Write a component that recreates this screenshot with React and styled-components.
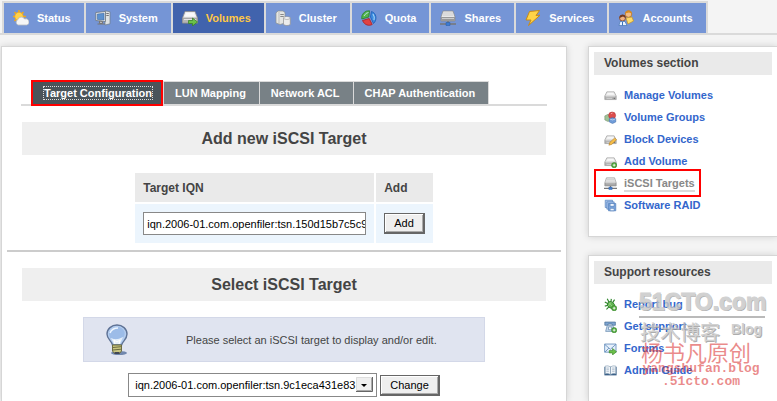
import React from 'react';
import styled, { createGlobalStyle, css } from 'styled-components';

const Global = createGlobalStyle`
  * { box-sizing: border-box; }
  body {
    margin: 0;
    background: #f4f4f4;
    color: #444;
    font: 11px/14px "Liberation Sans", Arial, sans-serif;
  }
  a { text-decoration: none; }
  ul { list-style: none; margin: 0; padding: 0; }
`;

const Page = styled.div`
  min-height: 100vh;
  display: flex;
  flex-direction: column;
  overflow: hidden;
`;

const Nav = styled.nav`
  display: flex;
  padding: 1px 0 0 2px;
  border-bottom: 2px solid #dadada;
`;

const NavList = styled.ul`
  display: flex;
  gap: 2px;
  padding: 2px 2px 0;
  background: #dadada;
`;

const NavLink = styled.a`
  display: flex;
  align-items: center;
  gap: 8px;
  height: 30px;
  padding: 0 13px 0 9px;
  font-weight: bold;
  color: ${(p) => (p.$active ? '#ffc745' : '#fff')};
  background: ${(p) => (p.$active ? '#4163ad' : '#7595d6')};
`;

const Body = styled.div`
  flex: 1;
  display: flex;
  gap: 21px;
  padding: 11px 0 0 1px;
`;

const panel = css`
  background: #fff;
  border: 1px solid #d6d6d6;
  box-shadow: 0 0 7px rgba(0, 0, 0, 0.14);
`;

const Main = styled.main`
  ${panel}
  flex: 1;
  min-width: 0;
  border-bottom: 0;
  padding: 34px 5px 0;
`;

const Section = styled.section`
  padding: 0 15px;
`;

const TabBar = styled.nav`
  display: flex;
  margin: 0 -1px;
  padding-left: 11px;
  border-bottom: 2px solid #dadada;
`;

const TabList = styled.ul`
  display: flex;
  gap: 1px;
  padding: 1px 1px 0;
  background: #dadada;
`;

const Tab = styled.a`
  display: block;
  height: 22px;
  padding: 4px 13px 0 11px;
  font-weight: bold;
  color: #fff;
  background: #788186;
  ${(p) =>
    p.$active &&
    css`
      background: #4a545a;
      outline: 2px solid #f00;
      outline-offset: 0;
      padding-right: 9px;
      margin-right: 2px;
      span { outline: 1px dotted #ddd; }
    `}
`;

const Title = styled.h2`
  margin: 16px 0 0;
  background: #efefef;
  color: #444;
  text-align: center;
  font-size: 16px;
  line-height: 33px;
`;

const Table = styled.table`
  margin: 16px auto 5px;
  border-spacing: 2px;
`;

const Th = styled.th`
  height: 29px;
  padding: 0 8px;
  text-align: left;
  font-size: 12px;
  background: #eaeaea;
`;

const Td = styled.td`
  height: 39px;
  padding: 0 8px;
  background: #ecf5fd;
`;

const TextInput = styled.input`
  display: block;
  width: 223px;
  height: 23px;
  padding: 2px 0 2px 3px;
  border: 1px solid #888;
  font: 11px "Liberation Sans", Arial, sans-serif;
  color: #000;
`;

const Button = styled.button`
  display: block;
  height: 21px;
  padding: 0 9px;
  color: #000;
  background: #efefef;
  border: 1px solid #666;
  border-right-width: 2px;
  border-bottom-width: 2px;
  box-shadow: inset 1px 1px #fff, inset -1px -1px #aaa;
  font: 11px "Liberation Sans", Arial, sans-serif;
`;

const Rule = styled.hr`
  margin: 0;
  border: 0;
  height: 2px;
  background: #ccc;
`;

const Notice = styled.div`
  display: flex;
  align-items: center;
  width: 402px;
  max-width: 100%;
  height: 45px;
  margin: 16px auto 11px;
  padding-left: 20px;
  gap: 56px;
  background: #e0e4f0;
  border: 1px solid #d3d8e8;
`;

const ChangeForm = styled.form`
  display: flex;
  justify-content: center;
  align-items: center;
  gap: 3px;
`;

const SelectBox = styled.div`
  position: relative;
  svg { position: absolute; top: 4px; right: 4px; pointer-events: none; }
`;

const Select = styled.select`
  appearance: none;
  display: block;
  width: 249px;
  height: 24px;
  padding: 0 20px 0 6px;
  border: 1px solid #888;
  border-radius: 0;
  background: #fff;
  color: #000;
  font: 11px "Liberation Sans", Arial, sans-serif;
`;

const Sidebar = styled.aside`
  position: relative;
  width: 189px;
  display: flex;
  flex-direction: column;
  gap: 18px;
`;

const Card = styled.section`
  ${panel}
  padding: 5px 5px 20px;
  border-right: 0;
  ${(p) => p.$fill && css`flex: 1; border-bottom: 0;`}
`;

const CardTitle = styled.h3`
  margin: 0 0 9px;
  padding-left: 10px;
  background: #eaeaea;
  font-size: 12px;
  line-height: 23px;
`;

const LinkRow = styled.li`
  display: flex;
  align-items: center;
  gap: 7px;
  height: 22px;
  padding-left: 10px;
`;

const SideLink = styled.a`
  font-weight: bold;
  color: ${(p) => (p.$active ? '#888' : '#36c')};
  box-shadow: ${(p) => (p.$active ? '0 2px #dadada' : 'none')};
`;

const Marked = styled.span`
  position: absolute;
  top: 123px;
  left: 6px;
  width: 107px;
  height: 28px;
  border: 2px solid #f00;
  pointer-events: none;
`;

const Stamp = styled.div`
  position: absolute;
  top: 243px;
  left: 51px;
  width: 126px;
  pointer-events: none;
  color: #c6c6c6;
  opacity: 0.8;
  text-shadow: 1px 1px #999;
`;

const StampLogo = styled.div`
  font: bold 23px/27px "Liberation Sans", sans-serif;
  -webkit-text-stroke: 1px #c6c6c6;
  border-bottom: 2px solid #aaa;
`;

const StampSub = styled.div`
  display: flex;
  justify-content: space-between;
  padding: 0 3px 0 1px;
  font: bold 14px/22px "Liberation Sans", sans-serif;
  span { font: 20px/28px "Noto Sans CJK SC", sans-serif; }
`;

const Signature = styled.div`
  position: absolute;
  top: 294px;
  left: 53px;
  width: 120px;
  pointer-events: none;
  color: rgba(220, 60, 60, 0.6);
  font: bold 13px/13px "Liberation Mono", monospace;
  text-align: center;
  strong { display: block; font: 22px/22px "Noto Sans CJK SC", sans-serif; text-align: left; }
`;

const Svg = ({ size = 16, children }) => (
  <svg width={size} height={size} viewBox="0 0 16 16" aria-hidden="true">{children}</svg>
);

const Disk = () => (
  <g>
    <path d="M3.5 3.5h9l2.5 5v4.5H1V8.500z" fill="#e6e6e6" stroke="#8c8c8c" strokeWidth=".7" />
    <path d="M1 8.500h14V13H1z" fill="#aaa" />
    <path d="M2 9.500h12M3 11.500h7" stroke="#ddd" />
    <path d="M4.500 4.500h7l1 2.500H3.500z" fill="#f7f7f7" />
    <path d="M12 11.500h1.500" stroke="#555" />
  </g>
);

const BigDisk = () => (
  <g>
    <path d="M3 1.500h10l2.500 6.500v5H.5V8z" fill="#ededed" stroke="#8c8c8c" strokeWidth=".8" />
    <path d="M.5 8h15v5H.5z" fill="#b5b5b5" stroke="#8c8c8c" strokeWidth=".6" />
    <path d="M2 9.500h12" stroke="#e4e4e4" />
    <path d="M4 3h8l1.200 3.500H2.800z" fill="#fafafa" />
  </g>
);

const NetDisk = () => (
  <g>
    <path d="M3 1h10l2 6v4H1V7z" fill="#e9e9e9" stroke="#888" strokeWidth=".7" />
    <path d="M1 7h14v4H1z" fill="#999" />
    <path d="M3 3h10M2.500 5h11M2 8.500h12" stroke="#ccc" />
    <path d="M0 14h16M8 11v3" stroke="#777" strokeWidth="1.500" />
    <path d="M6 12.500h4v3H6z" fill="#3d7bd0" stroke="#245ba5" strokeWidth=".5" />
  </g>
);

const PlusDot = () => (
  <g>
    <circle cx="12.500" cy="12.500" r="3.200" fill="#4fa83d" stroke="#2d7c22" strokeWidth=".6" />
    <path d="M12.500 10.800v3.400M10.800 12.500h3.400" stroke="#fff" />
  </g>
);

const Arrow = () => (
  <path d="M6.500 10.500h4V8l5 4-5 4v-2.500h-4z" fill="#6cc04a" stroke="#2f7d20" strokeWidth=".7" />
);

const ICONS = {
  status: (
    <g>
      <path d="M6 0v13M0 6.500h13M1.500 2l9 9M10.500 2l-9 9" stroke="#f0a81c" strokeWidth="1.600" />
      <circle cx="6" cy="6.500" r="4.200" fill="#ffd24a" stroke="#f2a51d" strokeWidth=".7" />
      <path d="M5 15a3 3 0 0 1 0-5.500 3.500 3.500 0 0 1 6.500-.5 3 3 0 0 1 2.500 6z" fill="#f6f6f6" stroke="#b9bcc2" strokeWidth=".8" />
    </g>
  ),
  system: (
    <g>
      <path d="M10 .8l5 1v12l-5 1.200z" fill="#dfe3e4" stroke="#6f7d86" strokeWidth=".7" />
      <path d="M11.300 3.500h2.500M11.300 5.500h2.500" stroke="#777" />
      <path d="M.8 2.500l9.700-1v10l-9.700-1z" fill="#eee" stroke="#67747d" strokeWidth=".8" />
      <path d="M2.300 4l6.800-.7v6.700l-6.800-.6z" fill="#5c91cf" stroke="#315d99" strokeWidth=".5" />
      <path d="M4.500 11l3 .5v2H4.500zM2.500 14h7.500" fill="#bbb" stroke="#777" />
    </g>
  ),
  volumes: <g><BigDisk /><Arrow /></g>,
  cluster: (
    <g>
      <path d="M1 3l2-2h5l2 1.500V13l-5 1.500L1 13z" fill="#e4e5e3" stroke="#8d918e" strokeWidth=".7" />
      <path d="M4 2v12" stroke="#aaa" strokeWidth=".7" />
      <path d="M5.300 4.500h3.500M5.300 6.500h3.500" stroke="#888" />
      <path d="M8.500 8v6.500c2 1.400 4.800 1.400 6.800 0V8z" fill="#ececec" stroke="#929292" strokeWidth=".7" />
      <ellipse cx="11.900" cy="8" rx="3.400" ry="1.300" fill="#fff" stroke="#929292" strokeWidth=".7" />
    </g>
  ),
  quota: (
    <g strokeWidth=".8">
      <path d="M8.500.8A7 7 0 0 0 .8 9l7-2z" fill="#55b54b" stroke="#257f2b" />
      <path d="M10.500 1.500c5 1.500 6 8.500 2 12L9.500 7z" fill="#3d8de0" stroke="#1c5bb5" />
      <path d="M1.500 10.500L8.200 8.500l3 6c-3 1.600-7.500 1-9.700-4z" fill="#e14242" stroke="#a91d20" />
      <path d="M3 6q2-3.500 4.500-3.500M12 4q2 3 1 6" fill="none" stroke="#c9ecff" />
    </g>
  ),
  net: <NetDisk />,
  services: <path d="M4.500 1.500L14.500.5 11 5.500l4-.3L3.500 15.500 6 10H1z" fill="#ffd447" stroke="#c98a15" />,
  accounts: (
    <g>
      <circle cx="10.500" cy="4" r="3.300" fill="#f1bd87" stroke="#b97323" strokeWidth=".8" />
      <path d="M7 3.500q1-3.300 3.700-3.100T14 3.500l-3-1z" fill="#d88c21" />
      <path d="M8 8l6-1 1.500 4-5.500 3z" fill="#fbdc6b" stroke="#c89324" strokeWidth=".7" />
      <circle cx="4.500" cy="8" r="3" fill="#efb181" stroke="#804223" strokeWidth=".8" />
      <path d="M1.500 8q0-3.700 3.500-3.200Q8 5 7.500 8L5 6.500z" fill="#713a20" />
      <path d="M1 15.500l1-4h5l2 4z" fill="#e9f3ff" stroke="#4877b5" strokeWidth=".7" />
      <path d="M4.500 12v3.500" stroke="#3b73bd" />
    </g>
  ),
  disk: <Disk />,
  groups: (
    <g strokeWidth=".6">
      <path d="M1 6l4-2 3 2v5l-3 2-4-2z" fill="#9fc397" stroke="#66835f" />
      <circle cx="10" cy="5.500" r="4.300" fill="#dc4d4d" stroke="#a92b2e" />
      <path d="M6.500 9.500l4-1.500 4 1.500v4l-4 2-4-2z" fill="#6f9bd8" stroke="#3b65a4" />
      <path d="M8.500 3.500l2-1M7.500 10l3 1 3-1" fill="none" stroke="#fff" />
    </g>
  ),
  block: <g><Disk /><path d="M6 15l1.200-3.500 6-5.500 2.300 2.300-6 5.700z" fill="#f5bd48" stroke="#a8701a" strokeWidth=".6" /></g>,
  add: <g><Disk /><PlusDot /></g>,
  raid: (
    <g fill="#a9c6ee" stroke="#4d7bb9" strokeWidth=".8">
      <path d="M1.500 1.500h9v9h-9z" /><path d="M3.500 3.500h9v9h-9z" /><path d="M5.500 5.500h9v9h-9z" fill="#7ba4dc" />
      <path d="M7.500 5.500h5V9h-5zM7.500 11.500h5v3h-5z" fill="#f3f7fd" />
    </g>
  ),
  bug: (
    <g>
      <path d="M1 5l4 2M1 10l4-1M4 1l2 4M9 1L8.500 5M13 2l-2.500 4M3 14l3-3" stroke="#2e852b" strokeWidth="1.400" />
      <ellipse cx="8.500" cy="8.500" rx="4.600" ry="3.800" transform="rotate(35 8.500 8.500)" fill="#62b552" stroke="#2c7c29" />
      <path d="M6 6l5 5M9 5l-4 5" stroke="#a4dc90" strokeWidth=".8" /><PlusDot />
    </g>
  ),
  phone: (
    <g>
      <path d="M1 2.500h13v4H10V5H5v1.500H1z" fill="#7ea4d0" stroke="#42698f" strokeWidth=".8" />
      <path d="M4 6.500h7l2 7.500H2z" fill="#c6d9ee" stroke="#5b7fa5" strokeWidth=".8" />
      <path d="M5.500 8.500h4v3.500h-4z" fill="#fff" stroke="#7292b3" /><PlusDot />
    </g>
  ),
  mail: <g><path d="M.8 2.500h14v10H.8z" fill="#e6f0fb" stroke="#5d88b8" /><path d="M1 3l6.800 6L14.500 3M1 12.500l5-5" fill="none" stroke="#5d88b8" /><Arrow /></g>,
  book: (
    <g>
      <path d="M.5 3.500h15V14H.5z" fill="#365d86" />
      <path d="M1.500 2.500q3.500-1 6.500 1v9.500q-3-2-6.500-1zM14.500 2.500q-3.500-1-6.500 1v9.500q3-2 6.500-1z" fill="#f0f4f8" stroke="#7f98b0" strokeWidth=".7" />
      <path d="M3 5h3M3 7h3M3 9h3M10 5h3M10 7h3M10 9h3" stroke="#a7b7c7" />
    </g>
  ),
};

const Icon = ({ name, size }) => <Svg size={size}>{ICONS[name]}</Svg>;

const Bulb = () => (
  <svg width="26" height="32" viewBox="0 0 26 32" aria-hidden="true">
    <ellipse cx="15" cy="29" rx="8" ry="2" fill="#7187ad" />
    <path d="M8.500 21C8 17 3 15.500 3 10a10 9 0 0 1 20 0c0 5.500-4.500 7-5.500 11z" fill="#b4cdef" stroke="#5f7396" strokeWidth="1.400" />
    <path d="M5 10a8 7.500 0 0 1 15.500-2q1 5-4 6.500T6 14z" fill="#9cbce8" />
    <path d="M6 9q2-5 8-5" fill="none" stroke="#eef6ff" strokeWidth="1.500" />
    <path d="M7 14q5 3 12-1l-3 7h-6z" fill="#e4effb" />
    <path d="M11 20l-1-4 3 2 3-2-1 4" fill="none" stroke="#fff" />
    <path d="M8.500 21h9v6l-2 2.500h-5l-2-2.500z" fill="#c9c681" stroke="#6d6c40" />
    <path d="M9 23.500l8-.8M9 26l8-.8" stroke="#6d6c40" />
    <path d="M10.500 28h5v2h-5z" fill="#424754" />
  </svg>
);

const SelectArrow = () => (
  <svg width="17" height="15" viewBox="0 0 17 15" aria-hidden="true">
    <path d="M0 0h17v15H0z" fill="#efefef" />
    <path d="M.5 14V.5H16" fill="none" stroke="#ddd" />
    <path d="M15.500 1v12.500H1" fill="none" stroke="#aaa" />
    <path d="M16.500 0v14.500H0" fill="none" stroke="#666" />
    <path d="M5 7h6l-3 3z" fill="#000" />
  </svg>
);

const NAV = [
  ['Status', 'status'], ['System', 'system'], ['Volumes', 'volumes'], ['Cluster', 'cluster'],
  ['Quota', 'quota'], ['Shares', 'net'], ['Services', 'services'], ['Accounts', 'accounts'],
];
const TABS = ['Target Configuration', 'LUN Mapping', 'Network ACL', 'CHAP Authentication'];
const VOLUME_LINKS = [
  ['Manage Volumes', 'disk'], ['Volume Groups', 'groups'], ['Block Devices', 'block'],
  ['Add Volume', 'add'], ['iSCSI Targets', 'net'], ['Software RAID', 'raid'],
];
const SUPPORT_LINKS = [
  ['Report bug', 'bug'], ['Get support', 'phone'], ['Forums', 'mail'], ['Admin Guide', 'book'],
];

const LinkCard = ({ title, links, active, fill }) => (
  <Card $fill={fill}>
    <CardTitle>{title}</CardTitle>
    <ul>
      {links.map(([label, icon]) => (
        <LinkRow key={label}>
          <Icon name={icon} size={13} />
          <SideLink href="#" $active={label === active}>{label}</SideLink>
        </LinkRow>
      ))}
    </ul>
  </Card>
);

export default function App() {
  return (
    <Page>
      <Global />
      <Nav>
        <NavList>
          {NAV.map(([label, icon]) => (
            <li key={label}>
              <NavLink href="#" $active={label === 'Volumes'}><Icon name={icon} />{label}</NavLink>
            </li>
          ))}
        </NavList>
      </Nav>
      <Body>
        <Main>
          <Section>
            <TabBar>
              <TabList>
                {TABS.map((label, i) => (
                  <li key={label}><Tab href="#" $active={i === 0}><span>{label}</span></Tab></li>
                ))}
              </TabList>
            </TabBar>
            <Title>Add new iSCSI Target</Title>
            <Table>
              <thead><tr><Th scope="col">Target IQN</Th><Th scope="col">Add</Th></tr></thead>
              <tbody>
                <tr>
                  <Td><TextInput aria-label="Target IQN" defaultValue="iqn.2006-01.com.openfiler:tsn.150d15b7c5c9" /></Td>
                  <Td><Button type="button">Add</Button></Td>
                </tr>
              </tbody>
            </Table>
          </Section>
          <Rule />
          <Section>
            <Title>Select iSCSI Target</Title>
            <Notice><Bulb />Please select an iSCSI target to display and/or edit.</Notice>
            <ChangeForm>
              <SelectBox>
                <Select aria-label="iSCSI target"><option>iqn.2006-01.com.openfiler:tsn.9c1eca431e83</option></Select>
                <SelectArrow />
              </SelectBox>
              <Button type="button">Change</Button>
            </ChangeForm>
          </Section>
        </Main>
        <Sidebar>
          <LinkCard title="Volumes section" links={VOLUME_LINKS} active="iSCSI Targets" />
          <LinkCard title="Support resources" links={SUPPORT_LINKS} fill />
          <Marked />
          <Stamp>
            <StampLogo>51CTO.com</StampLogo>
            <StampSub><span>技术博客</span>Blog</StampSub>
          </Stamp>
          <Signature><strong>杨书凡原创</strong>yangshufan.blog<br />.51cto.com</Signature>
        </Sidebar>
      </Body>
    </Page>
  );
}
